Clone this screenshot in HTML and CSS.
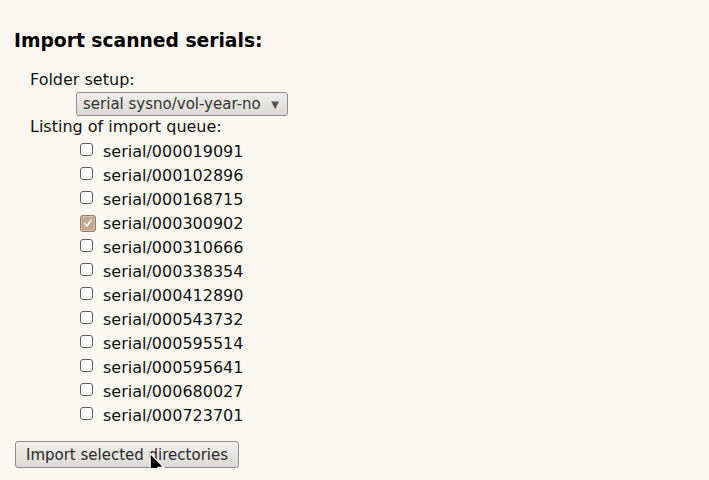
FILE: index.html
```html
<!DOCTYPE html>
<html>
<head>
<meta charset="utf-8">
<link rel="stylesheet" href="styles.css">
</head>
<body>
<form class="page">
  <h3 class="title">Import scanned serials:</h3>
  <div class="section">
    <div class="label">Folder setup:</div>
    <div class="select-wrap">
      <div class="select"><span>serial sysno/vol-year-no</span><span class="arrow">▼</span></div>
    </div>
    <div class="label">Listing of import queue:</div>
    <ul class="queue">
      <li><span class="cb"></span><span>serial/000019091</span></li>
      <li><span class="cb"></span><span>serial/000102896</span></li>
      <li><span class="cb"></span><span>serial/000168715</span></li>
      <li class="checked"><span class="cb"><svg viewBox="0 0 16 16" width="16" height="16"><path d="M4.2 8.4 L7 11.4 L11.5 4.4" fill="none" stroke="#fff" stroke-width="1.7" stroke-linecap="round" stroke-linejoin="round"/></svg></span><span>serial/000300902</span></li>
      <li><span class="cb"></span><span>serial/000310666</span></li>
      <li><span class="cb"></span><span>serial/000338354</span></li>
      <li><span class="cb"></span><span>serial/000412890</span></li>
      <li><span class="cb"></span><span>serial/000543732</span></li>
      <li><span class="cb"></span><span>serial/000595514</span></li>
      <li><span class="cb"></span><span>serial/000595641</span></li>
      <li><span class="cb"></span><span>serial/000680027</span></li>
      <li><span class="cb"></span><span>serial/000723701</span></li>
    </ul>
  </div>
  <div class="actions">
    <div class="button">Import selected directories</div>
    <svg class="cursor" viewBox="0 0 14 24" width="16" height="28"><path d="M1 1 L1 18 L5 14.2 L7.8 21 L10.6 19.8 L7.8 13.2 L13 13.2 Z" fill="#000" stroke="#fff" stroke-width="1.1" stroke-linejoin="round"/></svg>
  </div>
</form>
</body>
</html>
```
FILE: styles.css
```css
html, body {
  margin: 0;
  padding: 0;
  background: #fbf8f1;
}
body {
  font-family: "DejaVu Sans", sans-serif;
  color: #111;
  font-size: 16px;
}
.page {
  padding: 30px 0 0 14px;
}
.title {
  margin: 0;
  font-size: 18.72px;
  line-height: 22px;
  font-weight: bold;
  color: #000;
}
.section {
  margin: 18px 0 0 16px;
}
.label {
  line-height: 20px;
  white-space: nowrap;
}
.select-wrap {
  padding: 2px 0 1px 46px;
}
.select {
  box-sizing: border-box;
  display: flex;
  align-items: center;
  justify-content: space-between;
  width: 212px;
  height: 24px;
  padding: 0 8px 0 6px;
  border: 1px solid #8d8d8d;
  border-radius: 3px;
  background: linear-gradient(#f0eeeb, #dcd9d4);
  color: #333;
  font-size: 15px;
  white-space: nowrap;
}
.arrow {
  font-size: 10px;
  color: #555;
}
.queue {
  list-style: none;
  margin: 0;
  padding: 2px 0 0 50px;
}
.queue li {
  display: flex;
  align-items: center;
  height: 24px;
  gap: 10px;
  white-space: nowrap;
}
.cb {
  box-sizing: border-box;
  flex: none;
  width: 13px;
  height: 13px;
  margin: -3px 0 0 0;
  border: 1px solid #5e5e5e;
  border-radius: 3px;
  background: #fff;
  display: flex;
  align-items: center;
  justify-content: center;
}
.checked .cb {
  width: 16px;
  height: 17px;
  margin: 0 -3px 0 0;
  border-color: #8f7a63;
  background: #c0a88d;
  box-shadow: inset 0 0 0 1px #d6c4b0;
}
.actions {
  position: relative;
  padding: 14px 0 0 1px;
}
.button {
  display: inline-block;
  box-sizing: border-box;
  width: 224px;
  height: 27px;
  padding-top: 2px;
  line-height: 23px;
  text-align: center;
  border: 1px solid #8d8d8d;
  border-radius: 3px;
  background: linear-gradient(#f2f0ed, #dcd9d4);
  color: #2a2a2a;
  font-size: 15px;
  white-space: nowrap;
}
.cursor {
  position: absolute;
  left: 135px;
  top: 25px;
}
```
